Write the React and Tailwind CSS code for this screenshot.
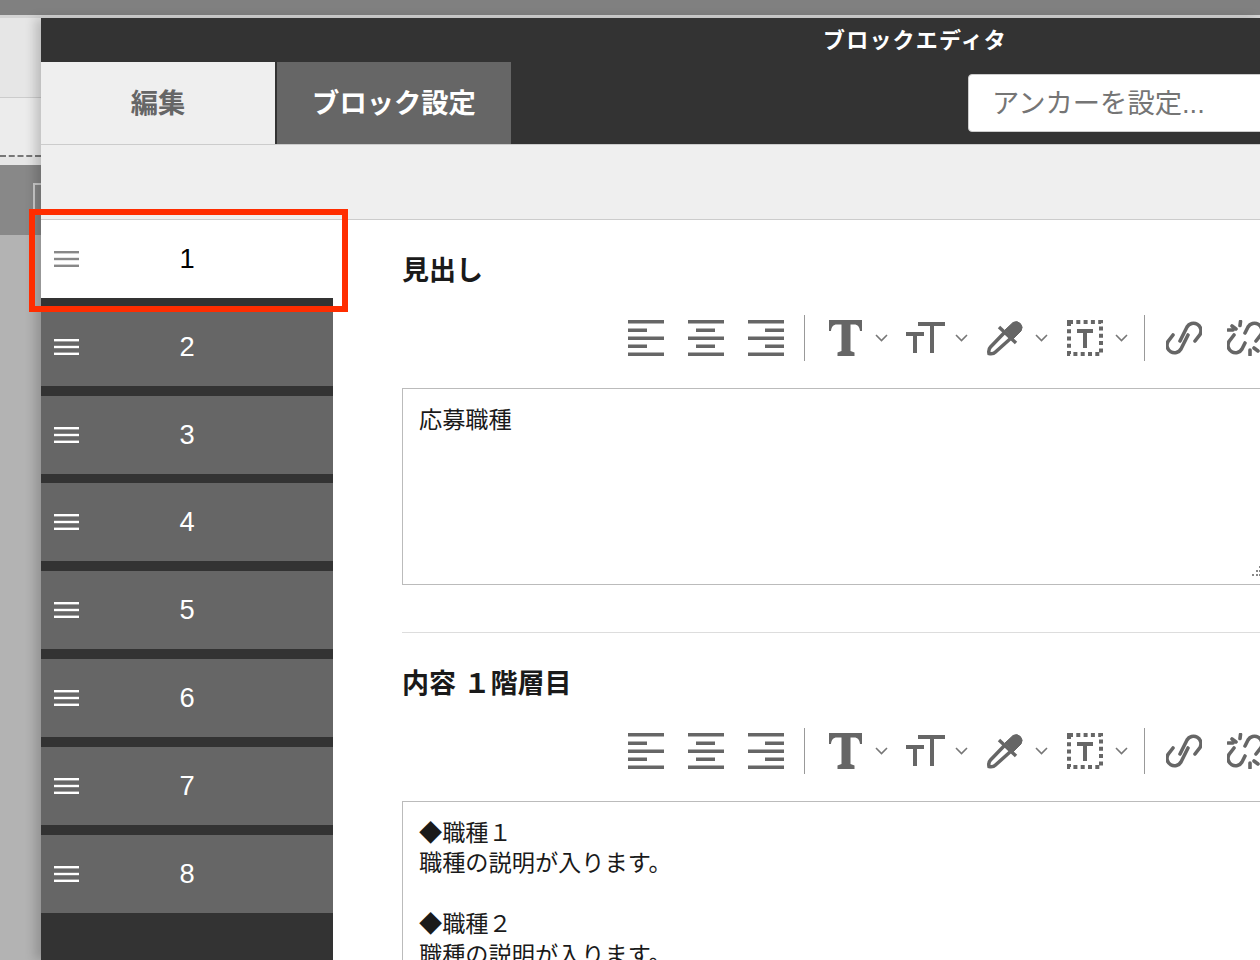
const FONT = '"Liberation Sans", "Noto Sans CJK JP", sans-serif';
const blocks = [1, 2, 3, 4, 5, 6, 7, 8];

const AlignIcon = ({ type }) => {
  const shortX = type === "left" ? 0 : type === "center" ? 8 : 17;
  return (
    <svg className="shrink-0" width="36" height="36" viewBox="0 0 36 36" fill="#666">
      <rect x="0" y="0" width="36" height="3.500" />
      <rect x={shortX} y="8.500" width="19" height="3.500" />
      <rect x="0" y="16.500" width="36" height="3.500" />
      <rect x={shortX} y="24.500" width="19" height="3.500" />
      <rect x="0" y="32.500" width="36" height="3.500" />
    </svg>
  );
};

const Chevron = () => (
  <svg className="shrink-0" width="13" height="8" viewBox="0 0 13 8" fill="none" stroke="#777" strokeWidth="1.600">
    <path d="M1 1l5.500 5.500L12 1" />
  </svg>
);

const Separator = () => <div className="h-[46px] w-px bg-[#999]" />;

const Toolbar = () => (
  <div className="flex h-[46px] items-center pl-[226px]">
    <div className="flex gap-6">
      <AlignIcon type="left" />
      <AlignIcon type="center" />
      <AlignIcon type="right" />
    </div>
    <div className="ml-5"><Separator /></div>
    <svg className="ml-6 shrink-0" width="33" height="36" viewBox="0 0 33 36" fill="#666">
      <path d="M0 0h33v11h-2c-.5-4-2-6.500-6-6.500h-3.500V31l4 1.500V36H8.500v-3.500l4-1.500V4.500H8c-4 0-5.500 2.500-6 6.500H0z" />
    </svg>
    <div className="ml-[13px]"><Chevron /></div>
    <svg className="ml-[18px] shrink-0" width="39" height="32" viewBox="0 0 39 32" fill="none" stroke="#666" strokeWidth="4">
      <path d="M0 12h18M9 12v19" />
      <path d="M12 2h27M26 2v29" />
    </svg>
    <div className="ml-[10px]"><Chevron /></div>
    <svg className="ml-[19px] shrink-0" width="36" height="36" viewBox="0 0 36 36" stroke="#666">
      <path fill="#666" strokeWidth="1" d="M18 10L26 2.500a6 6 0 0 1 8 8.500L26 19z" />
      <path fill="none" strokeWidth="3.500" d="M12 7l17 16" />
      <path fill="none" strokeWidth="3.500" d="M17 13L3.500 27c-1.500 1.500-2 4-1.500 6.500 2.500.5 5 0 6.500-1.500L23 19" />
    </svg>
    <div className="ml-3"><Chevron /></div>
    <svg className="ml-[19px] shrink-0" width="36" height="36" viewBox="0 0 36 36" fill="none" stroke="#666">
      <rect x="2" y="2" width="32" height="32" strokeWidth="4" strokeDasharray="4 3.300" />
      <path strokeWidth="4" d="M10 11h16M18 11v17" />
    </svg>
    <div className="ml-3"><Chevron /></div>
    <div className="ml-4"><Separator /></div>
    <svg className="ml-[21px] shrink-0" width="36" height="36" viewBox="0 0 36 36" fill="none" stroke="#666" strokeWidth="3.600" strokeLinecap="round">
      <path d="M14 21L21 7a7.500 7.500 0 0 1 13 7.500L29 21" />
      <path d="M22 15L15 29a7.500 7.500 0 0 1-13-7.500L7 15" />
    </svg>
    <svg className="ml-[25px] shrink-0" width="36" height="36" viewBox="0 0 36 36" fill="none" stroke="#666" strokeWidth="3.600" strokeLinecap="round">
      <path d="M18 13L21 7a7.500 7.500 0 0 1 13 7.500L29 21" />
      <path d="M18 23L15 29a7.500 7.500 0 0 1-13-7.500L7 15" />
      <path d="M13.500 1.500l-.5 4M5 6l4 3M1 10h5" />
      <path d="M23 30v5M27 28l4 3" />
    </svg>
  </div>
);

const Field = ({ label, text, grip }) => (
  <section>
    <h2 className="h-[32px] text-[27px] leading-[32px] font-bold text-[#1a1a1a]">{label}</h2>
    <div className="mt-[28px]"><Toolbar /></div>
    <div className="relative mt-[27px] w-[900px]">
      <textarea
        readOnly
        defaultValue={text}
        className="block h-[197px] w-full resize-none border border-[#bbb] bg-white px-4 py-[15.500px] text-[23.200px] leading-[30.500px] text-[#1a1a1a] outline-none"
      />
      {grip && (
        <svg className="absolute top-[178px] left-[849px]" width="10" height="10" fill="#888">
          <rect x="8" y="0" width="2" height="2" />
          <rect x="5" y="4" width="2" height="2" />
          <rect x="8" y="4" width="2" height="2" />
          <rect x="1" y="8" width="2" height="2" />
          <rect x="5" y="8" width="2" height="2" />
          <rect x="8" y="8" width="2" height="2" />
        </svg>
      )}
    </div>
  </section>
);

export default function App() {
  return (
    <div className="relative h-[960px] w-[1260px] overflow-hidden bg-[#b3b3b3]" style={{ fontFamily: FONT }}>
      <div className="h-[15px] bg-[#808080]" />
      <div className="h-[3px] bg-[#d4d4d4]" />

      <div className="flex h-[942px]">
        {/* page behind the modal */}
        <div className="w-[41px] shrink-0">
          <div className="h-[80px] border-b border-[#ccc] bg-[#e6e6e6]" />
          <div className="h-[59px] border-b-2 border-dashed border-[#777] bg-[#ececec]" />
          <div className="h-[8px] bg-[#e6e6e6]" />
          <div className="h-[70px] bg-[#888] pt-[18px] pl-[33px]">
            <div className="h-[52px] border-t-2 border-l-2 border-[#ccc]" />
          </div>
        </div>

        {/* block editor */}
        <div className="flex w-[1219px] shrink-0 flex-col shadow-[-6px_0_10px_rgba(0,0,0,0.18)]">
          <div className="border-b border-[#ccc] bg-[#333]">
            <div className="flex h-[44px] items-center pl-[782px] text-[22px] font-bold tracking-[1.200px] text-white">ブロックエディタ</div>
            <div className="flex h-[82px]">
              <div className="flex w-[234px] shrink-0 items-center justify-center bg-[#efefef] pt-[2px] text-[27.300px] font-bold text-[#666]">編集</div>
              <div className="ml-[2px] flex w-[234px] shrink-0 items-center justify-center bg-[#666] pt-[2px] text-[27.300px] font-bold text-white">ブロック設定</div>
              <div className="mt-[12px] ml-[457px] h-[58px] w-[300px] shrink-0 rounded-[4px] border border-[#ccc] bg-white pt-[11px] pl-[23px] text-[27.300px] leading-[36px] text-[#757575]">アンカーを設定...</div>
            </div>
          </div>
          <div className="h-[75px] border-b border-[#ccc] bg-[#efefef]" />

          <div className="flex min-h-0 flex-1">
            <ul className="w-[292px] shrink-0 bg-[#333]">
              {blocks.map((n) => (
                <li
                  key={n}
                  className={n === 1 ? "mb-[9.800px] flex h-[78px] items-center bg-white text-black" : "mb-[9.800px] flex h-[78px] items-center bg-[#666] text-white"}
                >
                  <svg className="ml-[13px]" width="25" height="16" viewBox="0 0 25 16" fill={n === 1 ? "#888" : "#fff"}>
                    <rect y="0" width="25" height="2.400" />
                    <rect y="6.800" width="25" height="2.400" />
                    <rect y="13.600" width="25" height="2.400" />
                  </svg>
                  <span className="ml-[100px] w-[16px] pt-px text-center text-[27.300px]">{n}</span>
                </li>
              ))}
            </ul>
            <div className="flex-1 bg-white pt-[35px] pl-[69px]">
              <Field label="見出し" text="応募職種" grip />
              <div className="mt-[47px] mb-[35px] h-px bg-[#ddd]" />
              <Field label="内容 １階層目" text={"◆職種１\n職種の説明が入ります。\n\n◆職種２\n職種の説明が入ります。"} />
            </div>
          </div>
        </div>
      </div>

      {/* red highlight over the first block */}
      <div className="absolute top-[209px] left-[29px] h-[103px] w-[319px] border-[6px] border-[#ff2d00]" />
    </div>
  );
}
